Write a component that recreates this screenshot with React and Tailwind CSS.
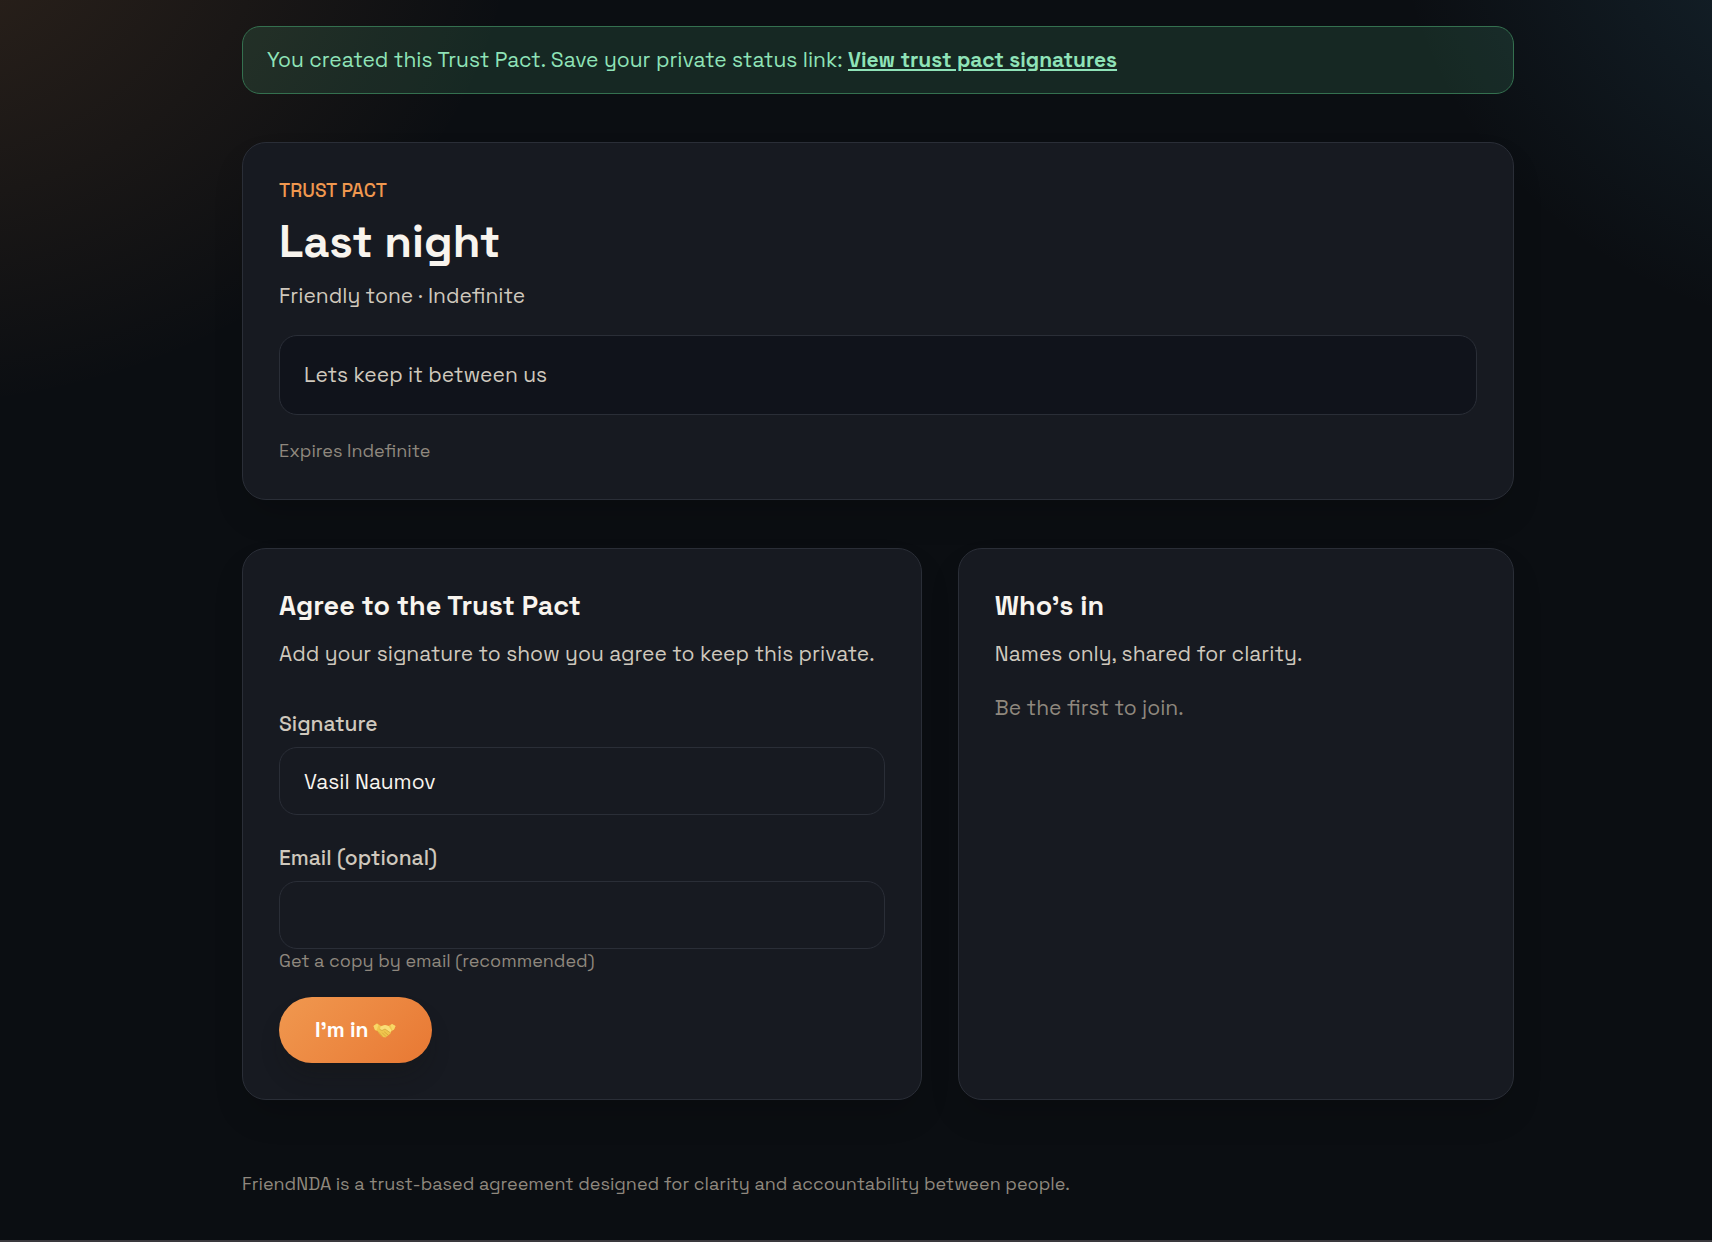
import React, { useState } from 'react';

const pact = {
  title: 'Last night',
  tone: 'Friendly tone',
  duration: 'Indefinite',
  message: 'Lets keep it between us',
};

function Card({ className = '', children }) {
  return (
    <section
      className={`rounded-3xl border border-[#2a2e37] bg-[#171a21] p-9 shadow-[0_18px_36px_-8px_rgba(0,0,0,0.2)] ${className}`}
    >
      {children}
    </section>
  );
}

function Field({ id, label, hint, ...props }) {
  return (
    <div className="flex flex-col">
      <label htmlFor={id} className="font-medium text-[#cfc8bd]">
        {label}
      </label>
      <input
        id={id}
        className="mt-1.5 h-[68px] w-full rounded-[18px] border border-[#2a2e37] bg-[#171a21] px-6 text-[#f8f4ee] outline-none focus:border-[#f0984f]"
        {...props}
      />
      {hint && <p className="text-lg leading-6 text-[#8f887e]">{hint}</p>}
    </div>
  );
}

function Handshake() {
  return (
    <svg viewBox="0 0 46 30" className="h-[15px] w-[23px]" role="img" aria-label="handshake">
      <path d="M1 6 L8 1 L16 6 L24 4 L31 6 L38 2 L45 6 L42 13 L37 16 L35 21 L30 25 L25 29 L19 28 L12 21 L9 16 L4 14 Z" fill="#f0c64e" />
      <path d="M1 6 L8 1 L11 4 L7 15 L4 14 Z" fill="#f8d766" />
      <path d="M45 6 L38 2 L35 5 L39 15 L42 13 Z" fill="#f8d766" />
      <path d="M15 7 L24 4 L31 6 L37 15 L34 19 L24 12 L18 15 L14 13 Z" fill="#fade78" />
      <path d="M14 13 L18 15 L24 12 L34 19 M23 18 L30 24 M19 20 L26 27 M11 18 L19 27" fill="none" stroke="#c99a30" strokeWidth="1.2" strokeLinecap="round" />
    </svg>
  );
}

export default function App() {
  const [signature, setSignature] = useState('Vasil Naumov');
  const [email, setEmail] = useState('');

  return (
    <div className="min-h-screen border-b-2 border-[#3a393d] bg-[#0b0e12] bg-[radial-gradient(620px_510px_at_-100px_-100px,rgba(240,152,79,0.16),transparent),radial-gradient(490px_460px_at_calc(100%_+_168px)_-120px,rgba(76,158,200,0.18),transparent)] bg-no-repeat pl-11 font-['Space_Grotesk',Inter,sans-serif] text-[21px] leading-[34px] text-[#cfc8bd]">
      <main className="mx-auto max-w-[1272px] pt-[26px]">
        <div className="rounded-[18px] border border-[#34704f] bg-[#6ee7a8]/12 px-6 py-4 text-[#8fe3b8]">
          You created this Trust Pact. Save your private status link:{' '}
          <a href="#signatures" className="font-semibold underline">
            View trust pact signatures
          </a>
        </div>

        <Card className="mt-12">
          <p className="text-[19px] leading-6 font-medium text-[#f0984f] uppercase">Trust Pact</p>
          <h1 className="mt-3 text-[45px] leading-[54px] font-semibold text-[#f8f4ee]">{pact.title}</h1>
          <p className="mt-2.5">
            {pact.tone} · {pact.duration}
          </p>
          <div className="mt-[22px] rounded-[18px] border border-[#2a2e37] bg-[#10131b] px-6 py-[22px]">
            {pact.message}
          </div>
          <p className="mt-6 text-lg leading-6 text-[#8f887e]">Expires {pact.duration}</p>
        </Card>

        <div className="mt-12 grid gap-9 lg:grid-cols-[1.1fr_0.9fr]">
          <Card>
            <h2 className="text-[27px] leading-[42px] font-semibold text-[#f8f4ee]">Agree to the Trust Pact</h2>
            <p className="mt-2.5">Add your signature to show you agree to keep this private.</p>
            <form className="mt-9" onSubmit={(e) => e.preventDefault()}>
              <div className="flex flex-col gap-[26px]">
                <Field
                  id="signature"
                  label="Signature"
                  type="text"
                  value={signature}
                  onChange={(e) => setSignature(e.target.value)}
                />
                <Field
                  id="email"
                  label="Email (optional)"
                  hint="Get a copy by email (recommended)"
                  type="email"
                  value={email}
                  onChange={(e) => setEmail(e.target.value)}
                />
              </div>
              <button
                type="submit"
                className="mt-6 flex h-[66px] items-center gap-1 rounded-full bg-linear-135 from-[#f0984f] to-[#e87833] px-9 font-semibold text-white shadow-[0_16px_24px_-6px_rgba(20,20,18,0.3)]"
              >
                I’m in
                <Handshake />
              </button>
            </form>
          </Card>

          {/* Signers list, empty until someone joins */}
          <Card>
            <h2 className="text-[27px] leading-[42px] font-semibold text-[#f8f4ee]">Who’s in</h2>
            <p className="mt-2.5">Names only, shared for clarity.</p>
            <p className="mt-5 text-[#8f887e]">Be the first to join.</p>
          </Card>
        </div>

        <footer className="mt-[72px] pb-11 text-lg leading-6 text-[#8f887e]">
          FriendNDA is a trust-based agreement designed for clarity and accountability between people.
        </footer>
      </main>
    </div>
  );
}
